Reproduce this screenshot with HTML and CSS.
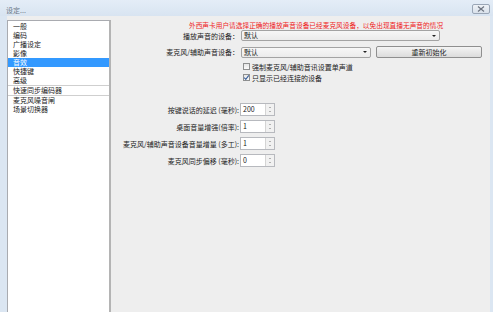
FILE: index.html
```html
<!DOCTYPE html>
<html lang="zh-CN">
<head>
  <meta charset="UTF-8" />
  <title>设定...</title>
  <link rel="stylesheet" href="styles.css">
</head>
<body>

  <div class="titlebar">
    <span class="title">设定...</span>
    <span class="close">
      <svg width="8" height="6" viewBox="0 0 8 6"><path d="M1 0.5 L7 5.5 M7 0.5 L1 5.5" stroke="#6d7480" stroke-width="1.2" fill="none"/></svg>
    </span>
  </div>

  <div class="client">
    <ul class="nav">
      <li>一般</li>
      <li>编码</li>
      <li>广播设定</li>
      <li>影像</li>
      <li class="active">音效</li>
      <li>快捷键</li>
      <li>高级</li>
      <li class="group">快速同步编码器</li>
      <li>麦克风噪音闸</li>
      <li>场景切换器</li>
    </ul>

    <div class="panel">
      <p class="note">外西声卡用户请选择正确的播放声音设备已经麦克风设备，以免出现直播无声音的情况</p>

      <div class="row row-first">
        <span class="lbl">播放声音的设备：</span>
        <div class="select select-wide"><span>默认</span><span class="arrow"></span></div>
      </div>

      <div class="row row-second">
        <span class="lbl">麦克风/辅助声音设备：</span>
        <div class="select select-short"><span>默认</span><span class="arrow"></span></div>
        <button class="btn">重新初始化</button>
      </div>

      <div class="check check-first">
        <span class="box"></span>
        <span>强制麦克风/辅助音讯设置单声道</span>
      </div>
      <div class="check">
        <span class="box">
          <svg width="7" height="7" viewBox="0 0 7 7"><path d="M1.2 3.6 L2.8 5.3 L5.8 1.4" stroke="#3a5f9a" stroke-width="1.1" fill="none"/></svg>
        </span>
        <span>只显示已经连接的设备</span>
      </div>

      <div class="spinrow spin-first">
        <span class="lbl">按键说话的延迟 (毫秒):</span>
        <div class="spin"><span class="val">200</span><span class="arrows"><i class="up"></i><i class="down"></i></span></div>
      </div>
      <div class="spinrow">
        <span class="lbl">桌面音量增强(倍率):</span>
        <div class="spin"><span class="val">1</span><span class="arrows"><i class="up"></i><i class="down"></i></span></div>
      </div>
      <div class="spinrow">
        <span class="lbl">麦克风/辅助声音设备音量增量 (多工):</span>
        <div class="spin"><span class="val">1</span><span class="arrows"><i class="up"></i><i class="down"></i></span></div>
      </div>
      <div class="spinrow">
        <span class="lbl">麦克风同步偏移 (毫秒):</span>
        <div class="spin"><span class="val">0</span><span class="arrows"><i class="up"></i><i class="down"></i></span></div>
      </div>
    </div>
  </div>

</body>
</html>
```

FILE: styles.css
```css
body {
  margin: 0;
  height: 312px;
  overflow: hidden;
  background: #dbe6f2;
  font-family: "Noto Sans CJK SC", "Liberation Sans", sans-serif;
  font-size: 7px;
  color: #222;
  display: flex;
  flex-direction: column;
}
.titlebar {
  height: 16px;
  display: flex;
  align-items: flex-start;
  justify-content: space-between;
  padding: 0 3px 0 6px;
  background: linear-gradient(#e4edf7, #d8e4f1);
}
.title {
  color: #6a7786;
  line-height: 8px;
  margin-top: 6px;
}
.close {
  margin-top: 4px;
  width: 16px;
  height: 8px;
  border: 1px solid #9aa6b6;
  border-radius: 2px;
  background: linear-gradient(#eef2f7, #d9e1eb);
  display: flex;
  align-items: center;
  justify-content: center;
}
.client {
  flex: 1;
  display: flex;
  margin: 0 3px 0 7px;
  background: #eeeeee;
  min-height: 0;
}
.nav {
  list-style: none;
  margin: 4px 0 0 0;
  padding: 1px 0 0 0;
  width: 101px;
  background: white;
  border: 1px solid #a9abb0;
  border-right: 2px solid #b4b4b4;
  border-bottom: none;
}
.nav li {
  height: 9px;
  line-height: 9px;
  padding-left: 5px;
  white-space: nowrap;
}
.nav li.active {
  background: #3399ff;
  color: white;
}
.nav li.group {
  border-top: 1px solid #cfcfcf;
  border-bottom: 1px solid #cfcfcf;
}
.panel {
  flex: 1;
  display: flex;
  flex-direction: column;
}
.note {
  margin: 5px 0 0 78px;
  line-height: 8px;
  font-size: 6.7px;
  color: #ee1c1c;
  white-space: nowrap;
}
.row,
.spinrow {
  display: flex;
  align-items: center;
}
.lbl {
  width: 128px;
  display: flex;
  justify-content: flex-end;
  white-space: nowrap;
  flex-shrink: 0;
}
.row .lbl {
  margin-right: 2px;
}
.row-first {
  margin-top: 1px;
  height: 11px;
}
.row-second {
  margin-top: 5px;
  height: 12px;
}
.select {
  height: 9px;
  border: 1px solid #a3a3a3;
  border-radius: 2px;
  background: linear-gradient(#f7f7f7, #ebebeb);
  display: flex;
  align-items: center;
  justify-content: space-between;
  padding: 0 3px 0 2px;
  line-height: 9px;
}
.select-wide {
  width: 192px;
}
.select-short {
  width: 123px;
}
.arrow {
  width: 0;
  height: 0;
  border-left: 2px solid transparent;
  border-right: 2px solid transparent;
  border-top: 2px solid #222;
}
.btn {
  margin-left: 5px;
  width: 106px;
  height: 12px;
  padding: 0;
  font-family: inherit;
  font-size: 7px;
  line-height: 10px;
  color: #222;
  border: 1px solid #8f8f8f;
  border-radius: 2px;
  background: linear-gradient(#f4f4f4, #dcdcdc);
}
.check {
  display: flex;
  align-items: center;
  height: 9px;
  margin: 2px 0 0 130px;
  white-space: nowrap;
}
.check-first {
  margin-top: 4px;
}
.box {
  width: 5px;
  height: 5px;
  border: 1px solid #8e8f8f;
  background: linear-gradient(#e6e6e6, #fafafa);
  margin: 0 2px 0 2px;
  display: flex;
  align-items: center;
  justify-content: center;
}
.box svg {
  flex-shrink: 0;
}
.spinrow {
  height: 13px;
  margin-top: 4px;
}
.spin-first {
  margin-top: 21px;
}
.spinrow .lbl {
  margin-right: 1px;
}
.spin {
  display: flex;
  height: 11px;
  border: 1px solid #b7b9be;
  background: white;
}
.val {
  width: 22px;
  padding-left: 2px;
  line-height: 11px;
}
.arrows {
  width: 8px;
  border-left: 1px solid #d4d4d4;
  background: #f1f1f1;
  display: flex;
  flex-direction: column;
  align-items: center;
  justify-content: space-around;
  padding: 1px 0;
}
.arrows i {
  width: 0;
  height: 0;
  border-left: 1.5px solid transparent;
  border-right: 1.5px solid transparent;
}
.arrows .up {
  border-bottom: 1.5px solid #707070;
}
.arrows .down {
  border-top: 1.5px solid #707070;
}
```
